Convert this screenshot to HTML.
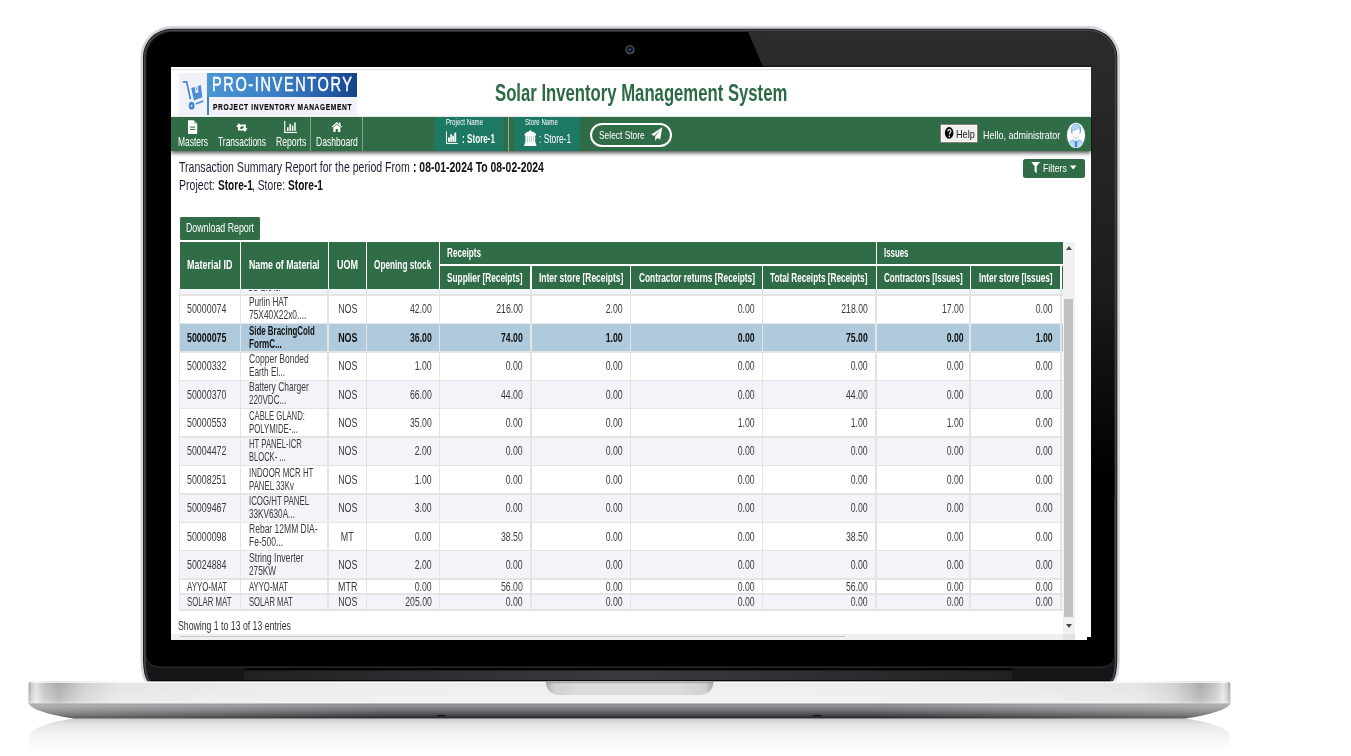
<!DOCTYPE html>
<html><head><meta charset="utf-8"><title>Solar Inventory Management System</title>
<style>
html,body{margin:0;padding:0;background:#fff}
#root{position:relative;width:1351px;height:756px;overflow:hidden;background:#fff;font-family:"Liberation Sans",sans-serif}
.abs{position:absolute;left:0;top:0}
.t{position:absolute;white-space:pre;line-height:1;font-family:"Liberation Sans",sans-serif}
</style></head>
<body><div id="root">
<svg class="abs" width="1351" height="756" viewBox="0 0 1351 756">
<defs>
  <linearGradient id="gRefl" x1="0" y1="0" x2="0" y2="1">
    <stop offset="0" stop-color="#000" stop-opacity="0.24"/>
    <stop offset="0.07" stop-color="#000" stop-opacity="0.15"/>
    <stop offset="0.2" stop-color="#000" stop-opacity="0.095"/>
    <stop offset="0.5" stop-color="#000" stop-opacity="0.045"/>
    <stop offset="1" stop-color="#000" stop-opacity="0"/>
  </linearGradient>
  <linearGradient id="gBaseTop" x1="0" y1="0" x2="1" y2="0">
    <stop offset="0.0000" stop-color="#9c9c9e"/>
    <stop offset="0.0025" stop-color="#cbcbcd"/>
    <stop offset="0.0060" stop-color="#e3e3e4"/>
    <stop offset="0.0126" stop-color="#c4c4c6"/>
    <stop offset="0.0246" stop-color="#a9a9ab"/>
    <stop offset="0.0467" stop-color="#d1d1d3"/>
    <stop offset="0.0758" stop-color="#e4e4e5"/>
    <stop offset="0.2000" stop-color="#ebebec"/>
    <stop offset="0.5000" stop-color="#efeff0"/>
    <stop offset="0.8000" stop-color="#ebebec"/>
    <stop offset="0.9242" stop-color="#e4e4e5"/>
    <stop offset="0.9533" stop-color="#d1d1d3"/>
    <stop offset="0.9754" stop-color="#a9a9ab"/>
    <stop offset="0.9874" stop-color="#c4c4c6"/>
    <stop offset="0.9940" stop-color="#e3e3e4"/>
    <stop offset="0.9975" stop-color="#cbcbcd"/>
    <stop offset="1.0000" stop-color="#9c9c9e"/>
  </linearGradient>
  <linearGradient id="gBaseTopV" x1="0" y1="0" x2="0" y2="1">
    <stop offset="0" stop-color="#fff" stop-opacity="0.0"/>
    <stop offset="0.85" stop-color="#fff" stop-opacity="0.25"/>
    <stop offset="1" stop-color="#fff" stop-opacity="0.5"/>
  </linearGradient>
  <linearGradient id="gBaseBot" x1="0" y1="0" x2="0" y2="1">
    <stop offset="0" stop-color="#848487"/>
    <stop offset="0.12" stop-color="#939396"/>
    <stop offset="0.45" stop-color="#737377"/>
    <stop offset="0.78" stop-color="#47474b"/>
    <stop offset="0.93" stop-color="#2b2b2d"/>
    <stop offset="1" stop-color="#2e2e30"/>
  </linearGradient>
  <linearGradient id="gNotch" x1="0" y1="0" x2="1" y2="0">
    <stop offset="0" stop-color="#a9a9ab"/>
    <stop offset="0.05" stop-color="#d0d0d2"/>
    <stop offset="0.2" stop-color="#dcdcdd"/>
    <stop offset="0.8" stop-color="#dcdcdd"/>
    <stop offset="0.95" stop-color="#d0d0d2"/>
    <stop offset="1" stop-color="#a9a9ab"/>
  </linearGradient>
  <linearGradient id="gGlare" x1="0" y1="30" x2="0" y2="480" gradientUnits="userSpaceOnUse">
    <stop offset="0" stop-color="#2c2c2c"/>
    <stop offset="0.55" stop-color="#1d1d1d"/>
    <stop offset="1" stop-color="#000"/>
  </linearGradient>
  <linearGradient id="gBotEnds" x1="0" y1="0" x2="1" y2="0">
    <stop offset="0" stop-color="#fff" stop-opacity="0.3"/>
    <stop offset="0.1" stop-color="#fff" stop-opacity="0.2"/>
    <stop offset="0.3" stop-color="#fff" stop-opacity="0"/>
    <stop offset="0.7" stop-color="#fff" stop-opacity="0"/>
    <stop offset="0.9" stop-color="#fff" stop-opacity="0.2"/>
    <stop offset="1" stop-color="#fff" stop-opacity="0.3"/>
  </linearGradient>
  <linearGradient id="gChin" x1="0" y1="0" x2="1" y2="0">
    <stop offset="0" stop-color="#212123"/>
    <stop offset="0.3" stop-color="#303134"/>
    <stop offset="0.5" stop-color="#3a3b3f"/>
    <stop offset="0.7" stop-color="#303134"/>
    <stop offset="1" stop-color="#212123"/>
  </linearGradient>
  <clipPath id="cpInner"><path d="M151.0 682 Q146.3 676 146.0 660 L146.0 57.4 A25.8 25.8 0 0 1 171.8 31.6 L1088.6 31.6 A25.8 25.8 0 0 1 1114.4 57.4 L1114.4 660 Q1114.1 676 1109.4 682 Z"/></clipPath>
</defs>
<!-- reflection -->
<path d="M28.6 752 L28.6 735 Q36 724 74 718.5 L1185 718.5 Q1224 724 1230.3 735 L1230.3 752 Z" fill="url(#gRefl)"/>
<!-- lid outer (light aluminium ring) -->
<path d="M145.4 682 Q140.7 676 140.4 660 L140.4 57.3 A31.2 31.2 0 0 1 171.6 26.1 L1088.7 26.1 A31.2 31.2 0 0 1 1119.9 57.3 L1119.9 660 Q1119.6 676 1114.9 682 Z" fill="#d3d5da"/>
<!-- dark edge ring -->
<path d="M148.0 682 Q143.3 676 143.0 660 L143.0 57.3 A28.6 28.6 0 0 1 171.6 28.7 L1088.7 28.7 A28.6 28.6 0 0 1 1117.3 57.3 L1117.3 660 Q1117.0 676 1112.3 682 Z" fill="#141415"/>
<path d="M148.9 682 Q144.2 676 143.9 660 L143.9 57.3 A27.7 27.7 0 0 1 171.6 29.6 L1088.7 29.6 A27.7 27.7 0 0 1 1116.4 57.3 L1116.4 660 Q1116.1 676 1111.4 682 Z" fill="#47474b"/>
<path d="M150.4 682 Q145.7 676 145.4 660 L145.4 57.3 A26.2 26.2 0 0 1 171.6 31.1 L1088.7 31.1 A26.2 26.2 0 0 1 1114.9 57.3 L1114.9 660 Q1114.6 676 1109.9 682 Z" fill="#2a2a2d"/>
<!-- black bezel -->
<path d="M151.3 682 Q146.6 676 146.3 660 L146.3 57.3 A25.3 25.3 0 0 1 171.6 32.0 L1088.7 32.0 A25.3 25.3 0 0 1 1114.0 57.3 L1114.0 660 Q1113.7 676 1109.0 682 Z" fill="#000"/>
<!-- glare -->
<g clip-path="url(#cpInner)">
  <path d="M747.7 31 L1120 31 L1120 500 L1091 500 L1091 66.8 L763 66.8 Z" fill="url(#gGlare)"/>
  <path d="M762.3 65.2 L1091 65.2 L1091 66.9 L763 66.9 Z" fill="#1b1b1b"/>
</g>
<!-- lower chin band -->
<g clip-path="url(#cpInner)">
<path d="M140 652 L146.0 652 Q146.3 666.2 160 666.2 L1101 666.2 Q1114.6 666.2 1114.4 652 L1121 652 L1121 683 L140 683 Z" fill="#232326"/>
<path d="M140 655 L146.0 655 Q146.6 668.2 160 668.2 L1101 668.2 Q1114.0 668.2 1114.4 655 L1121 655 L1121 683 L140 683 Z" fill="#161618"/>
<rect x="245" y="668.2" width="767" height="2.4" fill="#020203"/>
<path d="M245.6 670.6 L1010.4 670.6 L1012.6 680.4 L243.4 680.4 Z" fill="url(#gChin)"/>
<rect x="140" y="680.2" width="981" height="1.8" fill="#050506"/>
</g>
<!-- base top band -->
<path d="M28.6 703.6 L28.6 684.5 Q28.6 681.6 31.5 681.6 L1227.4 681.6 Q1230.3 681.6 1230.3 684.5 L1230.3 703.6 Z" fill="url(#gBaseTop)"/>
<path d="M28.6 703.6 L28.6 684.5 Q28.6 681.6 31.5 681.6 L1227.4 681.6 Q1230.3 681.6 1230.3 684.5 L1230.3 703.6 Z" fill="url(#gBaseTopV)"/>
<rect x="31" y="681.6" width="1197" height="1.3" fill="#fff" opacity="0.85"/>
<!-- base bottom band -->
<path d="M28.6 703.4 L1230.3 703.4 Q1226 712 1185 718.6 L74 718.6 Q33 712 28.6 703.4 Z" fill="url(#gBaseBot)"/>

<path d="M28.6 703.4 L1230.3 703.4 Q1226 712 1185 718.6 L74 718.6 Q33 712 28.6 703.4 Z" fill="url(#gBotEnds)"/>
<!-- notch -->
<path d="M545.7 681.6 L713.5 681.6 Q712.5 695 699 695 L560 695 Q546.7 695 545.7 681.6 Z" fill="url(#gNotch)"/>
<path d="M545.7 681.6 L713.5 681.6 L713.3 683.2 L545.9 683.2 Z" fill="#8e8e91" opacity="0.55"/>
<!-- little feet -->
<ellipse cx="441.2" cy="715.7" rx="4.6" ry="0.9" fill="#19191b"/>
<ellipse cx="816.9" cy="715.7" rx="4.6" ry="0.9" fill="#19191b"/>
<!-- camera -->
<circle cx="630" cy="49.6" r="4.9" fill="#34353a"/>
<circle cx="630" cy="50.2" r="3.9" fill="#4a4b51"/>
<circle cx="630" cy="49.6" r="3.1" fill="#121317"/>
<circle cx="630" cy="49.6" r="1.3" fill="#1f4190"/>
<circle cx="629.6" cy="49.3" r="0.5" fill="#3f69c0"/>
</svg>

<div id="screen" class="abs" style="width:1351px;height:756px">
<div class="abs" style="left:171.0px;top:66.8px;width:920.1px;height:573.0px;background:#fff;"></div>
<div class="abs" style="left:1087.4px;top:637.0px;width:3.8px;height:3.0px;background:#000;"></div>
<div class="abs" style="left:171.0px;top:68.7px;width:920.1px;height:1.1px;background:#e2e2e4;"></div>
<div class="abs" style="left:179.0px;top:72.9px;width:178.0px;height:42.0px;background:#f1f2f9;"></div>
<div class="abs" style="left:207.1px;top:72.9px;width:149.9px;height:23.9px;background:linear-gradient(90deg,#4b96d4 0%,#3b80c5 45%,#2a66b0 72%,#15438a 100%);"></div>
<div class="abs" style="left:207.1px;top:96.8px;width:2.0px;height:18.1px;background:#3f86c9;"></div>
<div class="abs" style="left:171.0px;top:117.0px;width:920.1px;height:33.6px;background:#306d47;box-shadow:0 2px 4px rgba(0,0,0,.68)"></div>
<div class="abs" style="left:310.1px;top:117.0px;width:1.0px;height:33.6px;background:rgba(255,255,255,.38);"></div>
<div class="abs" style="left:362.0px;top:117.0px;width:1.0px;height:33.6px;background:rgba(255,255,255,.38);"></div>
<div class="abs" style="left:435.0px;top:117.0px;width:69.4px;height:33.6px;background:#1d7964;"></div>
<div class="abs" style="left:513.8px;top:117.0px;width:66.4px;height:33.6px;background:#1d7964;"></div>
<div class="abs" style="left:507.8px;top:117.0px;width:1.0px;height:33.6px;background:rgba(255,255,255,.45);"></div>
<div class="abs" style="left:589.8px;top:122.8px;width:82.2px;height:24.3px;box-sizing:border-box;border:2px solid #fff;border-radius:12.2px"></div>
<div class="abs" style="left:940.2px;top:124.2px;width:38.0px;height:18.5px;box-sizing:border-box;border:0.8px solid #857c7c;background:#efefef;border-radius:1px;box-shadow:inset 0 0 0 1px #fbfbfb"></div>
<div class="abs" style="left:1023.0px;top:159.0px;width:62.0px;height:18.7px;background:#306d47;border-radius:2.5px"></div>
<div class="abs" style="left:180.1px;top:217.0px;width:79.9px;height:23.0px;background:#306d47;border-radius:1.5px"></div>
<div class="abs" style="left:179.6px;top:242.0px;width:883.4px;height:47.0px;background:#306d47;"></div>
<div class="abs" style="left:239.9px;top:242.0px;width:1.4px;height:47.0px;background:#fff;"></div>
<div class="abs" style="left:327.5px;top:242.0px;width:1.4px;height:47.0px;background:#fff;"></div>
<div class="abs" style="left:365.8px;top:242.0px;width:1.4px;height:47.0px;background:#fff;"></div>
<div class="abs" style="left:438.8px;top:242.0px;width:1.4px;height:47.0px;background:#fff;"></div>
<div class="abs" style="left:530.3px;top:265.0px;width:1.4px;height:24.0px;background:#fff;"></div>
<div class="abs" style="left:629.7px;top:265.0px;width:1.4px;height:24.0px;background:#fff;"></div>
<div class="abs" style="left:761.6px;top:265.0px;width:1.4px;height:24.0px;background:#fff;"></div>
<div class="abs" style="left:969.5px;top:265.0px;width:1.4px;height:24.0px;background:#fff;"></div>
<div class="abs" style="left:1060.2px;top:265.0px;width:1.4px;height:24.0px;background:#fff;"></div>
<div class="abs" style="left:875.5px;top:242.0px;width:1.4px;height:47.0px;background:#fff;"></div>
<div class="abs" style="left:439.5px;top:264.1px;width:623.5px;height:1.8px;background:#fff;"></div>
<div class="abs" style="left:179.6px;top:289.0px;width:883.4px;height:5.2px;background:#f3f4f9;"></div>
<div class="abs" style="left:179.6px;top:323.5px;width:883.4px;height:28.4px;background:#afcadd;"></div>
<div class="abs" style="left:179.6px;top:380.3px;width:883.4px;height:28.4px;background:#f3f4f9;"></div>
<div class="abs" style="left:179.6px;top:437.1px;width:883.4px;height:28.4px;background:#f3f4f9;"></div>
<div class="abs" style="left:179.6px;top:493.9px;width:883.4px;height:28.4px;background:#f3f4f9;"></div>
<div class="abs" style="left:179.6px;top:550.7px;width:883.4px;height:28.4px;background:#f3f4f9;"></div>
<div class="abs" style="left:179.6px;top:594.0px;width:883.4px;height:15.8px;background:#f3f4f9;"></div>
<div class="abs" style="left:179.6px;top:294.3px;width:883.4px;height:1.6px;background:#e4e4e5;"></div>
<div class="abs" style="left:179.6px;top:322.7px;width:883.4px;height:1.6px;background:#e4e4e5;"></div>
<div class="abs" style="left:179.6px;top:351.1px;width:883.4px;height:1.6px;background:#e4e4e5;"></div>
<div class="abs" style="left:179.6px;top:379.5px;width:883.4px;height:1.6px;background:#e4e4e5;"></div>
<div class="abs" style="left:179.6px;top:407.9px;width:883.4px;height:1.6px;background:#e4e4e5;"></div>
<div class="abs" style="left:179.6px;top:436.3px;width:883.4px;height:1.6px;background:#e4e4e5;"></div>
<div class="abs" style="left:179.6px;top:464.7px;width:883.4px;height:1.6px;background:#e4e4e5;"></div>
<div class="abs" style="left:179.6px;top:493.1px;width:883.4px;height:1.6px;background:#e4e4e5;"></div>
<div class="abs" style="left:179.6px;top:521.5px;width:883.4px;height:1.6px;background:#e4e4e5;"></div>
<div class="abs" style="left:179.6px;top:549.9px;width:883.4px;height:1.6px;background:#e4e4e5;"></div>
<div class="abs" style="left:179.6px;top:578.3px;width:883.4px;height:1.6px;background:#e4e4e5;"></div>
<div class="abs" style="left:179.6px;top:593.2px;width:883.4px;height:1.6px;background:#e4e4e5;"></div>
<div class="abs" style="left:179.6px;top:609.0px;width:883.4px;height:1.6px;background:#e4e4e5;"></div>
<div class="abs" style="left:178.8px;top:289.0px;width:1.6px;height:320.8px;background:#e4e4e5;"></div>
<div class="abs" style="left:239.8px;top:289.0px;width:1.6px;height:320.8px;background:#e4e4e5;"></div>
<div class="abs" style="left:327.4px;top:289.0px;width:1.6px;height:320.8px;background:#e4e4e5;"></div>
<div class="abs" style="left:365.7px;top:289.0px;width:1.6px;height:320.8px;background:#e4e4e5;"></div>
<div class="abs" style="left:438.7px;top:289.0px;width:1.6px;height:320.8px;background:#e4e4e5;"></div>
<div class="abs" style="left:530.2px;top:289.0px;width:1.6px;height:320.8px;background:#e4e4e5;"></div>
<div class="abs" style="left:629.6px;top:289.0px;width:1.6px;height:320.8px;background:#e4e4e5;"></div>
<div class="abs" style="left:761.5px;top:289.0px;width:1.6px;height:320.8px;background:#e4e4e5;"></div>
<div class="abs" style="left:875.4px;top:289.0px;width:1.6px;height:320.8px;background:#e4e4e5;"></div>
<div class="abs" style="left:969.4px;top:289.0px;width:1.6px;height:320.8px;background:#e4e4e5;"></div>
<div class="abs" style="left:1060.1px;top:289.0px;width:1.6px;height:320.8px;background:#e4e4e5;"></div>
<div class="abs" style="left:249.1px;top:289.8px;width:3.0px;height:1.4px;background:rgba(30,30,45,.7);filter:blur(.3px)"></div>
<div class="abs" style="left:254.0px;top:289.8px;width:3.1px;height:1.4px;background:rgba(30,30,45,.7);filter:blur(.3px)"></div>
<div class="abs" style="left:260.8px;top:289.8px;width:4.0px;height:1.4px;background:rgba(30,30,45,.7);filter:blur(.3px)"></div>
<div class="abs" style="left:266.0px;top:289.8px;width:1.0px;height:1.4px;background:rgba(30,30,45,.7);filter:blur(.3px)"></div>
<div class="abs" style="left:269.1px;top:289.8px;width:1.9px;height:1.4px;background:rgba(30,30,45,.7);filter:blur(.3px)"></div>
<div class="abs" style="left:274.0px;top:289.8px;width:1.0px;height:1.4px;background:rgba(30,30,45,.7);filter:blur(.3px)"></div>
<div class="abs" style="left:276.4px;top:289.8px;width:1.3px;height:1.4px;background:rgba(30,30,45,.7);filter:blur(.3px)"></div>
<div class="abs" style="left:278.8px;top:289.8px;width:1.1px;height:1.4px;background:rgba(30,30,45,.7);filter:blur(.3px)"></div>
<div class="abs" style="left:1063.2px;top:242.0px;width:12.0px;height:398.0px;background:#f1f1f1;"></div>
<div class="abs" style="left:1064.3px;top:299.0px;width:9.1px;height:317.5px;background:#c1c1c1;"></div>
<div class="abs" style="left:1063.2px;top:634.2px;width:12.0px;height:5.8px;background:#e3e3e3;"></div>
<div class="abs" style="left:1065.6px;top:245.8px;border-left:3.4px solid transparent;border-right:3.4px solid transparent;border-bottom:4px solid #4a4a4a"></div>
<div class="abs" style="left:1065.6px;top:623.6px;border-left:3.4px solid transparent;border-right:3.4px solid transparent;border-top:4px solid #4a4a4a"></div>
<div class="abs" style="left:171.0px;top:634.4px;width:892.2px;height:5.4px;background:#f0f0f0;"></div>
<div class="abs" style="left:180.0px;top:635.8px;width:665.0px;height:1.5px;background:#c6c6c6;"></div>
<svg class="abs" width="1351" height="756" viewBox="0 0 1351 756">
<!-- logo hand truck -->
<g fill="none" stroke="#4285d0" stroke-linecap="round" stroke-linejoin="round">
  <path d="M183.4 81.9 L186.7 81.9 L190.3 98.6" stroke-width="1.7"/>
  <path d="M196.2 103.8 L202.7 101.3" stroke-width="1.5"/>
</g>
<path d="M191.2 88.0 L194.7 86.9 L195.6 93.3 L198.4 92.5 L197.8 85.9 L200.8 85.1 L202.4 97.3 L193.9 100.5 Z" fill="#4d8cd6"/>
<path d="M196.2 87.4 L197.0 90.6" stroke="#4d8cd6" stroke-width="0.8" fill="none"/>
<ellipse cx="191.6" cy="105.7" rx="2.9" ry="3.9" fill="#4285d0"/>
<path d="M190.8 104.4 L192.9 105.7 L190.8 107.0 Z" fill="#f1f2f9"/>
<!-- Masters: file icon -->
<path d="M188.0 120.2 L193.6 120.2 L197.2 123.8 L197.2 134.0 L188.0 134.0 Z" fill="#fff"/>
<path d="M193.6 120.2 L193.6 123.8 L197.2 123.8 Z" fill="#b9d0c1"/>
<rect x="189.9" y="126.6" width="5.4" height="1.0" fill="#306d47"/>
<rect x="189.9" y="128.9" width="5.4" height="1.0" fill="#306d47"/>
<!-- Transactions: retweet icon -->
<g fill="#fff">
  <path d="M237.9 124.6 L245.9 124.6 L245.9 130.6 L237.9 130.6 Z M240.3 126.3 L240.3 129.1 L243.6 129.1 L243.6 126.3 Z" fill-rule="evenodd"/>
  <path d="M236.2 126.9 L238.9 123.0 L241.6 126.9 Z"/>
  <path d="M242.2 128.2 L247.5 128.2 L244.9 132.0 Z"/>
</g>
<!-- Reports: bar chart -->
<g fill="#fff">
  <rect x="284.2" y="120.9" width="1.1" height="12.1"/>
  <rect x="284.2" y="131.9" width="12.8" height="1.1"/>
  <rect x="287.0" y="127.3" width="1.5" height="3.6"/>
  <rect x="289.4" y="123.8" width="1.5" height="7.1"/>
  <rect x="291.8" y="125.6" width="1.5" height="5.3"/>
  <rect x="294.2" y="122.4" width="1.5" height="8.5"/>
</g>
<!-- Dashboard: home -->
<g fill="#fff">
  <path d="M336.8 122.0 L342.0 126.7 L341.2 127.6 L336.8 123.7 L332.4 127.6 L331.6 126.7 Z"/>
  <path d="M333.3 127.4 L336.8 124.4 L340.3 127.4 L340.3 131.9 L337.9 131.9 L337.9 128.9 L335.7 128.9 L335.7 131.9 L333.3 131.9 Z"/>
  <rect x="339.1" y="122.4" width="1.3" height="2.6"/>
</g>
<!-- Project: bar chart -->
<g fill="#fff">
  <rect x="446.0" y="131.2" width="1.0" height="12.7"/>
  <rect x="446.0" y="142.9" width="11.9" height="1.0"/>
  <rect x="448.0" y="137.4" width="2.1" height="4.4"/>
  <rect x="450.1" y="134.2" width="2.0" height="7.6"/>
  <rect x="452.1" y="135.8" width="2.0" height="6.0"/>
  <rect x="454.1" y="132.6" width="2.1" height="9.2"/>
</g>
<g fill="#1d7964" opacity="0.55">
  <rect x="449.9" y="134.2" width="0.5" height="7.6"/><rect x="451.9" y="134.2" width="0.5" height="7.6"/><rect x="453.9" y="132.6" width="0.5" height="9.2"/>
</g>
<!-- Store: building / bank icon -->
<g fill="#fff">
  <path d="M524.4 135.4 Q524.2 132.4 529.6 131.2 L529.8 130.1 L530.9 130.1 L531.1 131.2 Q536.4 132.4 536.2 135.4 Z"/>
  <rect x="525.4" y="135.0" width="9.8" height="8.0"/>
  <path d="M525.0 142.4 L535.6 142.4 L536.6 146.0 L524.0 146.0 Z"/>
</g>
<g fill="#1d7964" opacity="0.45">
  <rect x="527.3" y="136.2" width="0.7" height="6.0"/><rect x="529.3" y="136.2" width="0.7" height="6.0"/><rect x="531.3" y="136.2" width="0.7" height="6.0"/><rect x="533.3" y="136.2" width="0.7" height="6.0"/>
</g>
<!-- paper plane -->
<path d="M662.3 127.2 L651.2 134.4 L654.2 135.9 L660.2 130.0 L655.2 136.6 L655.2 141.1 L657.2 138.0 L660.2 139.6 Z" fill="#fff"/>
<!-- help icon -->
<ellipse cx="949.15" cy="132.95" rx="4.3" ry="5.85" fill="#050505"/>
<path d="M947.7 131.4 Q947.8 129.6 949.3 129.6 Q950.9 129.6 950.9 131.2 Q950.9 132.3 949.9 132.9 Q949.3 133.3 949.3 134.4" fill="none" stroke="#efefef" stroke-width="1.15"/>
<ellipse cx="949.3" cy="136.3" rx="0.75" ry="0.85" fill="#efefef"/>
<!-- avatar -->
<ellipse cx="1076.0" cy="135.4" rx="9.1" ry="12.7" fill="#fff"/>
<clipPath id="cpAv"><ellipse cx="1076.0" cy="135.4" rx="8.7" ry="12.3"/></clipPath>
<g clip-path="url(#cpAv)">
  <path d="M1071.6 131.2 Q1070.6 125.2 1075.6 124.0 Q1081.2 123.6 1080.8 131.0 L1080.2 131.0 Q1080.4 128.6 1078.6 127.6 Q1076.0 130.6 1072.2 130.2 L1072.0 131.4 Z" fill="#b3d6f8" stroke="#4e94de" stroke-width="0.6"/>
  <path d="M1071.3 131.0 L1072.2 131.0 L1072.4 134.6 Q1071.2 134.0 1071.3 131.0 Z M1080.7 131.0 L1079.8 131.0 L1079.6 134.6 Q1080.8 134.0 1080.7 131.0 Z" fill="#4a8fdc"/>
  <path d="M1073.4 136.4 Q1074.6 138.6 1076.0 138.8 Q1077.4 138.6 1078.6 136.4" fill="none" stroke="#6aa6e6" stroke-width="0.6"/>
  <path d="M1067.0 149 Q1067.4 141.4 1072.8 139.9 L1076.0 141.4 L1079.2 139.9 Q1084.6 141.4 1085.0 149 Z" fill="#b9d9f9" stroke="#5a9fe3" stroke-width="0.5"/>
  <path d="M1073.0 139.8 L1074.6 142.6 L1076.0 141.4 L1077.4 142.6 L1079.0 139.8" fill="none" stroke="#5a9fe3" stroke-width="0.6"/>
  <path d="M1075.1 141.6 L1076.9 141.6 L1077.2 147.6 L1074.8 147.6 Z" fill="#3f88dc"/>
</g>
<!-- filter funnel + caret -->
<path d="M1031.3 162.0 L1040.0 162.0 L1036.7 166.3 L1036.7 173.2 L1034.6 171.4 L1034.6 166.3 Z" fill="#fff"/>
<path d="M1069.9 165.6 L1076.5 165.6 L1073.2 169.4 Z" fill="#fff"/>
</svg>

<span class="t" style="left:494.9px;transform-origin:0 0;top:81.78px;font-size:23px;color:#2c6a45;transform:scaleX(0.726);font-weight:700">Solar Inventory Management System</span>
<span class="t" style="left:211.6px;transform-origin:0 0;top:74.32px;font-size:20px;color:#fff;transform:scaleX(0.728);letter-spacing:2.2px;-webkit-text-stroke:0.45px #fff">PRO-INVENTORY</span>
<span class="t" style="left:212.7px;transform-origin:0 0;top:103.38px;font-size:9.3px;color:#0a0a0a;transform:scaleX(0.712);font-weight:700;letter-spacing:0.9px;-webkit-text-stroke:0.2px #0a0a0a">PROJECT INVENTORY MANAGEMENT</span>
<span class="t" style="left:177.9px;transform-origin:0 0;top:135.75px;font-size:12.4px;color:#fff;transform:scaleX(0.683)">Masters</span>
<span class="t" style="left:218.0px;transform-origin:0 0;top:135.75px;font-size:12.4px;color:#fff;transform:scaleX(0.681)">Transactions</span>
<span class="t" style="left:276.3px;transform-origin:0 0;top:135.75px;font-size:12.4px;color:#fff;transform:scaleX(0.698)">Reports</span>
<span class="t" style="left:315.5px;transform-origin:0 0;top:135.75px;font-size:12.4px;color:#fff;transform:scaleX(0.691)">Dashboard</span>
<span class="t" style="left:445.7px;transform-origin:0 0;top:118.14px;font-size:8.4px;color:#fff;transform:scaleX(0.731)">Project Name</span>
<span class="t" style="left:462.4px;transform-origin:0 0;top:132.75px;font-size:12.4px;color:#fff;transform:scaleX(0.659);font-weight:700">: Store-1</span>
<span class="t" style="left:524.6px;transform-origin:0 0;top:118.14px;font-size:8.4px;color:#fff;transform:scaleX(0.734)">Store Name</span>
<span class="t" style="left:539.0px;transform-origin:0 0;top:132.75px;font-size:12.4px;color:#fff;transform:scaleX(0.677)">: Store-1</span>
<span class="t" style="left:599.4px;transform-origin:0 0;top:129.77px;font-size:11.2px;color:#fff;transform:scaleX(0.751)">Select Store</span>
<span class="t" style="left:955.6px;transform-origin:0 0;top:128.77px;font-size:11.2px;color:#222;transform:scaleX(0.817)">Help</span>
<span class="t" style="left:983.3px;transform-origin:0 0;top:130.26px;font-size:11.8px;color:#fff;transform:scaleX(0.761)">Hello, administrator</span>
<span class="t" style="left:1042.5px;transform-origin:0 0;top:163.02px;font-size:10.9px;color:#fff;transform:scaleX(0.803)">Filters</span>
<span class="t" style="left:178.7px;transform-origin:0 0;top:161.48px;font-size:13.9px;color:#1b2033;transform:scaleX(0.762)">Transaction Summary Report for the period From </span>
<span class="t" style="left:412.6px;transform-origin:0 0;top:161.48px;font-size:13.9px;color:#111;transform:scaleX(0.751);font-weight:700">: 08-01-2024 To 08-02-2024</span>
<span class="t" style="left:178.9px;transform-origin:0 0;top:179.48px;font-size:13.9px;color:#1b2033;transform:scaleX(0.760)">Project: </span>
<span class="t" style="left:217.6px;transform-origin:0 0;top:179.48px;font-size:13.9px;color:#111;transform:scaleX(0.727);font-weight:700">Store-1</span>
<span class="t" style="left:252.4px;transform-origin:0 0;top:179.48px;font-size:13.9px;color:#1b2033;transform:scaleX(0.740)">, Store: </span>
<span class="t" style="left:288.4px;transform-origin:0 0;top:179.48px;font-size:13.9px;color:#111;transform:scaleX(0.729);font-weight:700">Store-1</span>
<span class="t" style="left:186.2px;transform-origin:0 0;top:221.75px;font-size:12.4px;color:#fff;transform:scaleX(0.711)">Download Report</span>
<span class="t" style="left:186.9px;transform-origin:0 0;top:258.75px;font-size:12.4px;color:#fff;transform:scaleX(0.724);font-weight:700">Material ID</span>
<span class="t" style="left:249.1px;transform-origin:0 0;top:258.75px;font-size:12.4px;color:#fff;transform:scaleX(0.711);font-weight:700">Name of Material</span>
<span class="t" style="left:336.8px;transform-origin:0 0;top:258.75px;font-size:12.4px;color:#fff;transform:scaleX(0.726);font-weight:700">UOM</span>
<span class="t" style="left:374.1px;transform-origin:0 0;top:258.75px;font-size:12.4px;color:#fff;transform:scaleX(0.665);font-weight:700">Opening stock</span>
<span class="t" style="left:447.3px;transform-origin:0 0;top:246.75px;font-size:12.4px;color:#fff;transform:scaleX(0.658);font-weight:700">Receipts</span>
<span class="t" style="left:883.9px;transform-origin:0 0;top:246.75px;font-size:12.4px;color:#fff;transform:scaleX(0.632);font-weight:700">Issues</span>
<span class="t" style="left:447.3px;transform-origin:0 0;top:271.75px;font-size:12.4px;color:#fff;transform:scaleX(0.669);font-weight:700">Supplier [Receipts]</span>
<span class="t" style="left:538.5px;transform-origin:0 0;top:271.75px;font-size:12.4px;color:#fff;transform:scaleX(0.680);font-weight:700">Inter store [Receipts]</span>
<span class="t" style="left:638.8px;transform-origin:0 0;top:271.75px;font-size:12.4px;color:#fff;transform:scaleX(0.671);font-weight:700">Contractor returns [Receipts]</span>
<span class="t" style="left:770.3px;transform-origin:0 0;top:271.75px;font-size:12.4px;color:#fff;transform:scaleX(0.662);font-weight:700">Total Receipts [Receipts]</span>
<span class="t" style="left:883.9px;transform-origin:0 0;top:271.75px;font-size:12.4px;color:#fff;transform:scaleX(0.654);font-weight:700">Contractors [Issues]</span>
<span class="t" style="left:979.0px;transform-origin:0 0;top:271.75px;font-size:12.4px;color:#fff;transform:scaleX(0.664);font-weight:700">Inter store [Issues]</span>
<span class="t" style="left:178.4px;transform-origin:0 0;top:619.75px;font-size:12.4px;color:#333;transform:scaleX(0.703)">Showing 1 to 13 of 13 entries</span>
<span class="t" style="left:186.9px;transform-origin:0 0;top:302.50px;font-size:12.7px;color:#3a3a3c;transform:scaleX(0.698)">50000074</span>
<span class="t" style="left:248.7px;transform-origin:0 0;top:295.92px;font-size:12.2px;color:#3a3a3c;transform:scaleX(0.677)">Purlin HAT</span>
<span class="t" style="left:248.7px;transform-origin:0 0;top:308.92px;font-size:12.2px;color:#3a3a3c;transform:scaleX(0.688)">75X40X22x0....</span>
<span class="t" style="left:333.8px;transform-origin:50% 0;top:302.50px;font-size:12.7px;color:#3a3a3c;transform:scaleX(0.700)">NOS</span>
<span class="t" style="right:919.4px;transform-origin:100% 0;top:302.50px;font-size:12.7px;color:#3a3a3c;transform:scaleX(0.685)">42.00</span>
<span class="t" style="right:828.2px;transform-origin:100% 0;top:302.50px;font-size:12.7px;color:#3a3a3c;transform:scaleX(0.685)">216.00</span>
<span class="t" style="right:728.4px;transform-origin:100% 0;top:302.50px;font-size:12.7px;color:#3a3a3c;transform:scaleX(0.685)">2.00</span>
<span class="t" style="right:596.2px;transform-origin:100% 0;top:302.50px;font-size:12.7px;color:#3a3a3c;transform:scaleX(0.685)">0.00</span>
<span class="t" style="right:483.3px;transform-origin:100% 0;top:302.50px;font-size:12.7px;color:#3a3a3c;transform:scaleX(0.685)">218.00</span>
<span class="t" style="right:387.7px;transform-origin:100% 0;top:302.50px;font-size:12.7px;color:#3a3a3c;transform:scaleX(0.685)">17.00</span>
<span class="t" style="right:298.1px;transform-origin:100% 0;top:302.50px;font-size:12.7px;color:#3a3a3c;transform:scaleX(0.685)">0.00</span>
<span class="t" style="left:186.9px;transform-origin:0 0;top:331.50px;font-size:12.7px;color:#111;transform:scaleX(0.698);font-weight:700">50000075</span>
<span class="t" style="left:248.7px;transform-origin:0 0;top:324.92px;font-size:12.2px;color:#111;transform:scaleX(0.648);font-weight:700">Side BracingCold</span>
<span class="t" style="left:248.7px;transform-origin:0 0;top:337.92px;font-size:12.2px;color:#111;transform:scaleX(0.665);font-weight:700">FormC...</span>
<span class="t" style="left:333.8px;transform-origin:50% 0;top:331.50px;font-size:12.7px;color:#111;transform:scaleX(0.700);font-weight:700">NOS</span>
<span class="t" style="right:919.4px;transform-origin:100% 0;top:331.50px;font-size:12.7px;color:#111;transform:scaleX(0.685);font-weight:700">36.00</span>
<span class="t" style="right:828.2px;transform-origin:100% 0;top:331.50px;font-size:12.7px;color:#111;transform:scaleX(0.685);font-weight:700">74.00</span>
<span class="t" style="right:728.4px;transform-origin:100% 0;top:331.50px;font-size:12.7px;color:#111;transform:scaleX(0.685);font-weight:700">1.00</span>
<span class="t" style="right:596.2px;transform-origin:100% 0;top:331.50px;font-size:12.7px;color:#111;transform:scaleX(0.685);font-weight:700">0.00</span>
<span class="t" style="right:483.3px;transform-origin:100% 0;top:331.50px;font-size:12.7px;color:#111;transform:scaleX(0.685);font-weight:700">75.00</span>
<span class="t" style="right:387.7px;transform-origin:100% 0;top:331.50px;font-size:12.7px;color:#111;transform:scaleX(0.685);font-weight:700">0.00</span>
<span class="t" style="right:298.1px;transform-origin:100% 0;top:331.50px;font-size:12.7px;color:#111;transform:scaleX(0.685);font-weight:700">1.00</span>
<span class="t" style="left:186.9px;transform-origin:0 0;top:359.50px;font-size:12.7px;color:#3a3a3c;transform:scaleX(0.698)">50000332</span>
<span class="t" style="left:248.7px;transform-origin:0 0;top:352.92px;font-size:12.2px;color:#3a3a3c;transform:scaleX(0.700)">Copper Bonded</span>
<span class="t" style="left:248.7px;transform-origin:0 0;top:365.92px;font-size:12.2px;color:#3a3a3c;transform:scaleX(0.675)">Earth El...</span>
<span class="t" style="left:333.8px;transform-origin:50% 0;top:359.50px;font-size:12.7px;color:#3a3a3c;transform:scaleX(0.700)">NOS</span>
<span class="t" style="right:919.4px;transform-origin:100% 0;top:359.50px;font-size:12.7px;color:#3a3a3c;transform:scaleX(0.685)">1.00</span>
<span class="t" style="right:828.2px;transform-origin:100% 0;top:359.50px;font-size:12.7px;color:#3a3a3c;transform:scaleX(0.685)">0.00</span>
<span class="t" style="right:728.4px;transform-origin:100% 0;top:359.50px;font-size:12.7px;color:#3a3a3c;transform:scaleX(0.685)">0.00</span>
<span class="t" style="right:596.2px;transform-origin:100% 0;top:359.50px;font-size:12.7px;color:#3a3a3c;transform:scaleX(0.685)">0.00</span>
<span class="t" style="right:483.3px;transform-origin:100% 0;top:359.50px;font-size:12.7px;color:#3a3a3c;transform:scaleX(0.685)">0.00</span>
<span class="t" style="right:387.7px;transform-origin:100% 0;top:359.50px;font-size:12.7px;color:#3a3a3c;transform:scaleX(0.685)">0.00</span>
<span class="t" style="right:298.1px;transform-origin:100% 0;top:359.50px;font-size:12.7px;color:#3a3a3c;transform:scaleX(0.685)">0.00</span>
<span class="t" style="left:186.9px;transform-origin:0 0;top:388.50px;font-size:12.7px;color:#3a3a3c;transform:scaleX(0.698)">50000370</span>
<span class="t" style="left:248.7px;transform-origin:0 0;top:380.92px;font-size:12.2px;color:#3a3a3c;transform:scaleX(0.695)">Battery Charger</span>
<span class="t" style="left:248.7px;transform-origin:0 0;top:393.92px;font-size:12.2px;color:#3a3a3c;transform:scaleX(0.662)">220VDC...</span>
<span class="t" style="left:333.8px;transform-origin:50% 0;top:388.50px;font-size:12.7px;color:#3a3a3c;transform:scaleX(0.700)">NOS</span>
<span class="t" style="right:919.4px;transform-origin:100% 0;top:388.50px;font-size:12.7px;color:#3a3a3c;transform:scaleX(0.685)">66.00</span>
<span class="t" style="right:828.2px;transform-origin:100% 0;top:388.50px;font-size:12.7px;color:#3a3a3c;transform:scaleX(0.685)">44.00</span>
<span class="t" style="right:728.4px;transform-origin:100% 0;top:388.50px;font-size:12.7px;color:#3a3a3c;transform:scaleX(0.685)">0.00</span>
<span class="t" style="right:596.2px;transform-origin:100% 0;top:388.50px;font-size:12.7px;color:#3a3a3c;transform:scaleX(0.685)">0.00</span>
<span class="t" style="right:483.3px;transform-origin:100% 0;top:388.50px;font-size:12.7px;color:#3a3a3c;transform:scaleX(0.685)">44.00</span>
<span class="t" style="right:387.7px;transform-origin:100% 0;top:388.50px;font-size:12.7px;color:#3a3a3c;transform:scaleX(0.685)">0.00</span>
<span class="t" style="right:298.1px;transform-origin:100% 0;top:388.50px;font-size:12.7px;color:#3a3a3c;transform:scaleX(0.685)">0.00</span>
<span class="t" style="left:186.9px;transform-origin:0 0;top:416.50px;font-size:12.7px;color:#3a3a3c;transform:scaleX(0.698)">50000553</span>
<span class="t" style="left:248.7px;transform-origin:0 0;top:409.92px;font-size:12.2px;color:#3a3a3c;transform:scaleX(0.629)">CABLE GLAND:</span>
<span class="t" style="left:248.7px;transform-origin:0 0;top:422.92px;font-size:12.2px;color:#3a3a3c;transform:scaleX(0.640)">POLYMIDE-...</span>
<span class="t" style="left:333.8px;transform-origin:50% 0;top:416.50px;font-size:12.7px;color:#3a3a3c;transform:scaleX(0.700)">NOS</span>
<span class="t" style="right:919.4px;transform-origin:100% 0;top:416.50px;font-size:12.7px;color:#3a3a3c;transform:scaleX(0.685)">35.00</span>
<span class="t" style="right:828.2px;transform-origin:100% 0;top:416.50px;font-size:12.7px;color:#3a3a3c;transform:scaleX(0.685)">0.00</span>
<span class="t" style="right:728.4px;transform-origin:100% 0;top:416.50px;font-size:12.7px;color:#3a3a3c;transform:scaleX(0.685)">0.00</span>
<span class="t" style="right:596.2px;transform-origin:100% 0;top:416.50px;font-size:12.7px;color:#3a3a3c;transform:scaleX(0.685)">1.00</span>
<span class="t" style="right:483.3px;transform-origin:100% 0;top:416.50px;font-size:12.7px;color:#3a3a3c;transform:scaleX(0.685)">1.00</span>
<span class="t" style="right:387.7px;transform-origin:100% 0;top:416.50px;font-size:12.7px;color:#3a3a3c;transform:scaleX(0.685)">1.00</span>
<span class="t" style="right:298.1px;transform-origin:100% 0;top:416.50px;font-size:12.7px;color:#3a3a3c;transform:scaleX(0.685)">0.00</span>
<span class="t" style="left:186.9px;transform-origin:0 0;top:444.50px;font-size:12.7px;color:#3a3a3c;transform:scaleX(0.698)">50004472</span>
<span class="t" style="left:248.7px;transform-origin:0 0;top:437.92px;font-size:12.2px;color:#3a3a3c;transform:scaleX(0.634)">HT PANEL-ICR</span>
<span class="t" style="left:248.7px;transform-origin:0 0;top:450.92px;font-size:12.2px;color:#3a3a3c;transform:scaleX(0.621)">BLOCK- ...</span>
<span class="t" style="left:333.8px;transform-origin:50% 0;top:444.50px;font-size:12.7px;color:#3a3a3c;transform:scaleX(0.700)">NOS</span>
<span class="t" style="right:919.4px;transform-origin:100% 0;top:444.50px;font-size:12.7px;color:#3a3a3c;transform:scaleX(0.685)">2.00</span>
<span class="t" style="right:828.2px;transform-origin:100% 0;top:444.50px;font-size:12.7px;color:#3a3a3c;transform:scaleX(0.685)">0.00</span>
<span class="t" style="right:728.4px;transform-origin:100% 0;top:444.50px;font-size:12.7px;color:#3a3a3c;transform:scaleX(0.685)">0.00</span>
<span class="t" style="right:596.2px;transform-origin:100% 0;top:444.50px;font-size:12.7px;color:#3a3a3c;transform:scaleX(0.685)">0.00</span>
<span class="t" style="right:483.3px;transform-origin:100% 0;top:444.50px;font-size:12.7px;color:#3a3a3c;transform:scaleX(0.685)">0.00</span>
<span class="t" style="right:387.7px;transform-origin:100% 0;top:444.50px;font-size:12.7px;color:#3a3a3c;transform:scaleX(0.685)">0.00</span>
<span class="t" style="right:298.1px;transform-origin:100% 0;top:444.50px;font-size:12.7px;color:#3a3a3c;transform:scaleX(0.685)">0.00</span>
<span class="t" style="left:186.9px;transform-origin:0 0;top:473.50px;font-size:12.7px;color:#3a3a3c;transform:scaleX(0.698)">50008251</span>
<span class="t" style="left:248.7px;transform-origin:0 0;top:466.92px;font-size:12.2px;color:#3a3a3c;transform:scaleX(0.647)">INDOOR MCR HT</span>
<span class="t" style="left:248.7px;transform-origin:0 0;top:479.92px;font-size:12.2px;color:#3a3a3c;transform:scaleX(0.642)">PANEL 33Kv</span>
<span class="t" style="left:333.8px;transform-origin:50% 0;top:473.50px;font-size:12.7px;color:#3a3a3c;transform:scaleX(0.700)">NOS</span>
<span class="t" style="right:919.4px;transform-origin:100% 0;top:473.50px;font-size:12.7px;color:#3a3a3c;transform:scaleX(0.685)">1.00</span>
<span class="t" style="right:828.2px;transform-origin:100% 0;top:473.50px;font-size:12.7px;color:#3a3a3c;transform:scaleX(0.685)">0.00</span>
<span class="t" style="right:728.4px;transform-origin:100% 0;top:473.50px;font-size:12.7px;color:#3a3a3c;transform:scaleX(0.685)">0.00</span>
<span class="t" style="right:596.2px;transform-origin:100% 0;top:473.50px;font-size:12.7px;color:#3a3a3c;transform:scaleX(0.685)">0.00</span>
<span class="t" style="right:483.3px;transform-origin:100% 0;top:473.50px;font-size:12.7px;color:#3a3a3c;transform:scaleX(0.685)">0.00</span>
<span class="t" style="right:387.7px;transform-origin:100% 0;top:473.50px;font-size:12.7px;color:#3a3a3c;transform:scaleX(0.685)">0.00</span>
<span class="t" style="right:298.1px;transform-origin:100% 0;top:473.50px;font-size:12.7px;color:#3a3a3c;transform:scaleX(0.685)">0.00</span>
<span class="t" style="left:186.9px;transform-origin:0 0;top:501.50px;font-size:12.7px;color:#3a3a3c;transform:scaleX(0.698)">50009467</span>
<span class="t" style="left:248.7px;transform-origin:0 0;top:494.92px;font-size:12.2px;color:#3a3a3c;transform:scaleX(0.646)">ICOG/HT PANEL</span>
<span class="t" style="left:248.7px;transform-origin:0 0;top:507.92px;font-size:12.2px;color:#3a3a3c;transform:scaleX(0.671)">33KV630A...</span>
<span class="t" style="left:333.8px;transform-origin:50% 0;top:501.50px;font-size:12.7px;color:#3a3a3c;transform:scaleX(0.700)">NOS</span>
<span class="t" style="right:919.4px;transform-origin:100% 0;top:501.50px;font-size:12.7px;color:#3a3a3c;transform:scaleX(0.685)">3.00</span>
<span class="t" style="right:828.2px;transform-origin:100% 0;top:501.50px;font-size:12.7px;color:#3a3a3c;transform:scaleX(0.685)">0.00</span>
<span class="t" style="right:728.4px;transform-origin:100% 0;top:501.50px;font-size:12.7px;color:#3a3a3c;transform:scaleX(0.685)">0.00</span>
<span class="t" style="right:596.2px;transform-origin:100% 0;top:501.50px;font-size:12.7px;color:#3a3a3c;transform:scaleX(0.685)">0.00</span>
<span class="t" style="right:483.3px;transform-origin:100% 0;top:501.50px;font-size:12.7px;color:#3a3a3c;transform:scaleX(0.685)">0.00</span>
<span class="t" style="right:387.7px;transform-origin:100% 0;top:501.50px;font-size:12.7px;color:#3a3a3c;transform:scaleX(0.685)">0.00</span>
<span class="t" style="right:298.1px;transform-origin:100% 0;top:501.50px;font-size:12.7px;color:#3a3a3c;transform:scaleX(0.685)">0.00</span>
<span class="t" style="left:186.9px;transform-origin:0 0;top:530.50px;font-size:12.7px;color:#3a3a3c;transform:scaleX(0.698)">50000098</span>
<span class="t" style="left:248.7px;transform-origin:0 0;top:522.92px;font-size:12.2px;color:#3a3a3c;transform:scaleX(0.699)">Rebar 12MM DIA-</span>
<span class="t" style="left:248.7px;transform-origin:0 0;top:535.92px;font-size:12.2px;color:#3a3a3c;transform:scaleX(0.701)">Fe-500...</span>
<span class="t" style="left:338.3px;transform-origin:50% 0;top:530.50px;font-size:12.7px;color:#3a3a3c;transform:scaleX(0.700)">MT</span>
<span class="t" style="right:919.4px;transform-origin:100% 0;top:530.50px;font-size:12.7px;color:#3a3a3c;transform:scaleX(0.685)">0.00</span>
<span class="t" style="right:828.2px;transform-origin:100% 0;top:530.50px;font-size:12.7px;color:#3a3a3c;transform:scaleX(0.685)">38.50</span>
<span class="t" style="right:728.4px;transform-origin:100% 0;top:530.50px;font-size:12.7px;color:#3a3a3c;transform:scaleX(0.685)">0.00</span>
<span class="t" style="right:596.2px;transform-origin:100% 0;top:530.50px;font-size:12.7px;color:#3a3a3c;transform:scaleX(0.685)">0.00</span>
<span class="t" style="right:483.3px;transform-origin:100% 0;top:530.50px;font-size:12.7px;color:#3a3a3c;transform:scaleX(0.685)">38.50</span>
<span class="t" style="right:387.7px;transform-origin:100% 0;top:530.50px;font-size:12.7px;color:#3a3a3c;transform:scaleX(0.685)">0.00</span>
<span class="t" style="right:298.1px;transform-origin:100% 0;top:530.50px;font-size:12.7px;color:#3a3a3c;transform:scaleX(0.685)">0.00</span>
<span class="t" style="left:186.9px;transform-origin:0 0;top:558.50px;font-size:12.7px;color:#3a3a3c;transform:scaleX(0.698)">50024884</span>
<span class="t" style="left:248.7px;transform-origin:0 0;top:551.92px;font-size:12.2px;color:#3a3a3c;transform:scaleX(0.711)">String Inverter</span>
<span class="t" style="left:248.7px;transform-origin:0 0;top:564.92px;font-size:12.2px;color:#3a3a3c;transform:scaleX(0.678)">275KW</span>
<span class="t" style="left:333.8px;transform-origin:50% 0;top:558.50px;font-size:12.7px;color:#3a3a3c;transform:scaleX(0.700)">NOS</span>
<span class="t" style="right:919.4px;transform-origin:100% 0;top:558.50px;font-size:12.7px;color:#3a3a3c;transform:scaleX(0.685)">2.00</span>
<span class="t" style="right:828.2px;transform-origin:100% 0;top:558.50px;font-size:12.7px;color:#3a3a3c;transform:scaleX(0.685)">0.00</span>
<span class="t" style="right:728.4px;transform-origin:100% 0;top:558.50px;font-size:12.7px;color:#3a3a3c;transform:scaleX(0.685)">0.00</span>
<span class="t" style="right:596.2px;transform-origin:100% 0;top:558.50px;font-size:12.7px;color:#3a3a3c;transform:scaleX(0.685)">0.00</span>
<span class="t" style="right:483.3px;transform-origin:100% 0;top:558.50px;font-size:12.7px;color:#3a3a3c;transform:scaleX(0.685)">0.00</span>
<span class="t" style="right:387.7px;transform-origin:100% 0;top:558.50px;font-size:12.7px;color:#3a3a3c;transform:scaleX(0.685)">0.00</span>
<span class="t" style="right:298.1px;transform-origin:100% 0;top:558.50px;font-size:12.7px;color:#3a3a3c;transform:scaleX(0.685)">0.00</span>
<span class="t" style="left:186.8px;transform-origin:0 0;top:580.92px;font-size:12.2px;color:#3a3a3c;transform:scaleX(0.650)">AYYO-MAT</span>
<span class="t" style="left:248.7px;transform-origin:0 0;top:580.92px;font-size:12.2px;color:#3a3a3c;transform:scaleX(0.629)">AYYO-MAT</span>
<span class="t" style="left:333.8px;transform-origin:50% 0;top:580.50px;font-size:12.7px;color:#3a3a3c;transform:scaleX(0.700)">MTR</span>
<span class="t" style="right:919.4px;transform-origin:100% 0;top:580.50px;font-size:12.7px;color:#3a3a3c;transform:scaleX(0.685)">0.00</span>
<span class="t" style="right:828.2px;transform-origin:100% 0;top:580.50px;font-size:12.7px;color:#3a3a3c;transform:scaleX(0.685)">56.00</span>
<span class="t" style="right:728.4px;transform-origin:100% 0;top:580.50px;font-size:12.7px;color:#3a3a3c;transform:scaleX(0.685)">0.00</span>
<span class="t" style="right:596.2px;transform-origin:100% 0;top:580.50px;font-size:12.7px;color:#3a3a3c;transform:scaleX(0.685)">0.00</span>
<span class="t" style="right:483.3px;transform-origin:100% 0;top:580.50px;font-size:12.7px;color:#3a3a3c;transform:scaleX(0.685)">56.00</span>
<span class="t" style="right:387.7px;transform-origin:100% 0;top:580.50px;font-size:12.7px;color:#3a3a3c;transform:scaleX(0.685)">0.00</span>
<span class="t" style="right:298.1px;transform-origin:100% 0;top:580.50px;font-size:12.7px;color:#3a3a3c;transform:scaleX(0.685)">0.00</span>
<span class="t" style="left:186.8px;transform-origin:0 0;top:595.92px;font-size:12.2px;color:#3a3a3c;transform:scaleX(0.640)">SOLAR MAT</span>
<span class="t" style="left:248.7px;transform-origin:0 0;top:595.92px;font-size:12.2px;color:#3a3a3c;transform:scaleX(0.628)">SOLAR MAT</span>
<span class="t" style="left:333.8px;transform-origin:50% 0;top:595.50px;font-size:12.7px;color:#3a3a3c;transform:scaleX(0.700)">NOS</span>
<span class="t" style="right:919.4px;transform-origin:100% 0;top:595.50px;font-size:12.7px;color:#3a3a3c;transform:scaleX(0.685)">205.00</span>
<span class="t" style="right:828.2px;transform-origin:100% 0;top:595.50px;font-size:12.7px;color:#3a3a3c;transform:scaleX(0.685)">0.00</span>
<span class="t" style="right:728.4px;transform-origin:100% 0;top:595.50px;font-size:12.7px;color:#3a3a3c;transform:scaleX(0.685)">0.00</span>
<span class="t" style="right:596.2px;transform-origin:100% 0;top:595.50px;font-size:12.7px;color:#3a3a3c;transform:scaleX(0.685)">0.00</span>
<span class="t" style="right:483.3px;transform-origin:100% 0;top:595.50px;font-size:12.7px;color:#3a3a3c;transform:scaleX(0.685)">0.00</span>
<span class="t" style="right:387.7px;transform-origin:100% 0;top:595.50px;font-size:12.7px;color:#3a3a3c;transform:scaleX(0.685)">0.00</span>
<span class="t" style="right:298.1px;transform-origin:100% 0;top:595.50px;font-size:12.7px;color:#3a3a3c;transform:scaleX(0.685)">0.00</span>
</div>
</div></body></html>
